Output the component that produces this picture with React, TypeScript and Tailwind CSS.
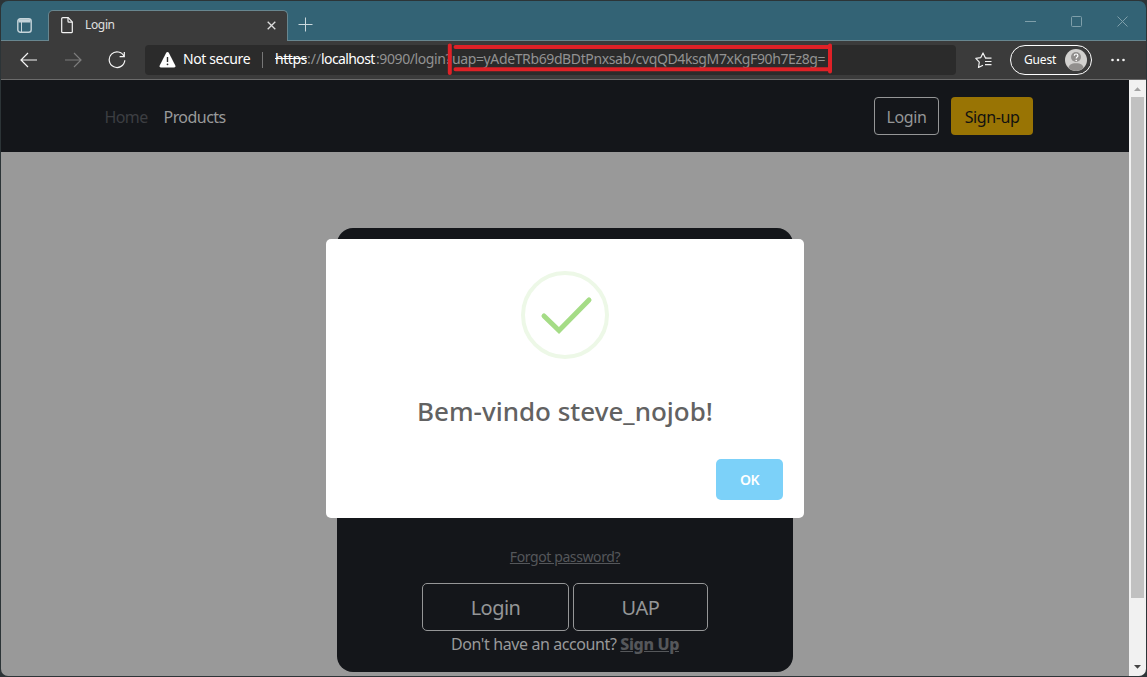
import type { ReactNode } from "react";

function TitleBar() {
  return (
    <div className="flex h-10 shrink-0 items-end bg-[#336375]">
      <div className="flex h-10 w-[47px] items-center justify-center border-b border-[#68868f] pt-[9px]">
        <svg width="15" height="15" viewBox="0 0 15 15" fill="none" stroke="#c5d4da" className="mr-px">
          <rect x=".8" y=".8" width="13.400" height="13.400" rx="2.500" strokeWidth="1.400" />
          <path d="M1.500 2.800h12" strokeWidth="3.200" />
          <path d="M4.500 4v10" strokeWidth="1" />
        </svg>
      </div>
      <div className="-mb-px flex h-8 w-60 items-center rounded-t-[5px] border border-b-0 border-[#68868f] bg-[#3b3b3b] pl-3">
        <svg width="12" height="17" viewBox="0 0 12 17" fill="none" stroke="#f4f4f4" strokeWidth="1.2" className="-mt-[3px]">
          <path d="M1.800.7h5.400l4.100 4.200v9.800c0 .7-.4 1-1 1H1.700c-.7 0-1-.4-1-1V1.800c0-.7.4-1.100 1.100-1.100Z" />
          <path d="M7 .8v3.400c0 .6.3.9.9.9h3.300" />
        </svg>
        <span className="-mt-1 ml-[12px] w-8 text-[12px] tracking-[-0.35px] whitespace-nowrap text-[#e0e0e0]">Login</span>
        <svg width="9" height="9" viewBox="0 0 9 9" stroke="#dedede" strokeWidth="1.300" className="-mt-[2px] mr-[11px] ml-auto">
          <path d="m.7.7 7.600 7.600M8.300.7.7 8.300" />
        </svg>
      </div>
      <div className="flex h-10 flex-1 items-center border-b border-[#68868f] pl-[10px]">
        <svg width="15" height="15" viewBox="0 0 15 15" stroke="#cbd9de" className="mt-[8px]">
          <path d="M.5 7.500h14M7.500.5v14" />
        </svg>
        <div className="mt-[2px] mr-[18px] ml-auto flex items-center gap-[35px]">
          <svg width="11" height="11" viewBox="0 0 11 11" stroke="#7f9faa"><path d="M0 5.500h11" /></svg>
          <svg width="11" height="11" viewBox="0 0 11 11" fill="none" stroke="#7f9faa"><rect x=".5" y=".5" width="10" height="10" rx="1" /></svg>
          <svg width="11" height="11" viewBox="0 0 11 11" stroke="#7f9faa"><path d="m.5.5 10 10M10.500.5l-10 10" /></svg>
        </div>
      </div>
    </div>
  );
}

function Toolbar() {
  return (
    <div className="flex h-[39px] shrink-0 items-center border-b border-[#6b6b6b] bg-[#3b3b3b]">
      <svg width="18" height="16" viewBox="0 0 18 16" fill="none" stroke="#f5f5f5" strokeWidth="1.2" className="ml-[19px]">
        <path d="M8 1 1 8l7 7M1 8h16" />
      </svg>
      <svg width="18" height="16" viewBox="0 0 18 16" fill="none" stroke="#7c7c7c" strokeWidth="1.2" className="ml-[26px]">
        <path d="m10 1 7 7-7 7M17 8H1" />
      </svg>
      <svg width="18" height="18" viewBox="0 0 18 18" fill="none" stroke="#f5f5f5" strokeWidth="1.2" className="ml-[26px]">
        <path d="M16.100 5.400A7.800 7.800 0 1 0 16.800 9.200M16.300 1v4.700h-4.700" />
      </svg>
      <div className="relative ml-[19px] flex h-[30px] w-[811px] items-center rounded-[4px] bg-[#2b2b2b] text-[14px] leading-5 whitespace-nowrap">
        <svg width="17" height="16" viewBox="0 0 17 16" className="ml-[14px]">
          <path d="M8.500 0c.6 0 1 .3 1.300.8l6.500 12.800c.5 1-.1 2-1.200 2H1.900c-1.100 0-1.700-1-1.200-2L7.200.8C7.500.3 7.900 0 8.500 0Z" fill="#fff" />
          <path d="M8.500 5v5" stroke="#2b2b2b" strokeWidth="1.400" />
          <circle cx="8.500" cy="12.300" r=".9" fill="#2b2b2b" />
        </svg>
        <div className="-mt-0.5 flex items-center">
          <span className="ml-[7px] w-[68px] tracking-[-0.4px] text-white">Not secure</span>
          <span className="mt-0.5 ml-[11px] h-4 w-px bg-[#777]" />
          <span className="ml-[12px] w-[32px] tracking-[-0.45px] text-white line-through">https</span>
          <span className="w-[14px] text-[#929292]">://</span>
          <span className="w-[55px] tracking-[-0.6px] text-white">localhost</span>
          <span className="w-[76px] tracking-[-0.4px] text-[#929292]">:9090/login?</span>
          <span className="w-[372px] tracking-[-0.38px] text-[#929292]">uap=yAdeTRb69dBDtPnxsab/cvqQD4ksgM7xKgF90h7Ez8g=</span>
        </div>
        <svg width="388" height="34" viewBox="0 0 388 34" fill="none" stroke="#df2127" strokeWidth="4" strokeLinecap="round" className="absolute -top-[3px] left-[301px]">
          <path d="M3.800 3.500v27.500M9.500 4.900H384M9.500 27.300H384M384 3.500v26" />
        </svg>
      </div>
      <svg width="18" height="17" viewBox="0 0 18 17" fill="none" stroke="#f1f1f1" strokeWidth="1.200" strokeLinejoin="round" className="ml-[19px]">
        <path d="M11.500 6 10.200 5.600 8 1 5.800 5.600.8 6.400l3.500 3.800-.8 5.300L8 13.300M10 6.200h6.500M10 9.500h6.500M10 12.700h6.500" />
      </svg>
      <div className="ml-[17px] flex h-[30px] w-[82px] items-center rounded-full border border-white pl-[13px] text-[12px] text-white">
        <span className="w-[33px] tracking-[-0.15px]">Guest</span>
        <svg width="22" height="22" viewBox="0 0 22 22" className="ml-[8px]">
          <circle cx="11" cy="11" r="11" fill="#d2d1cf" />
          <path d="M3.500 19c.3-3 2.500-4.800 7.500-4.800s7.200 1.800 7.500 4.800A11 11 0 0 1 3.500 19Z" fill="#918f8d" />
          <circle cx="11" cy="8" r="5" fill="#918f8d" />
          <path d="M9.300 6.700c0-2.300 3.600-2.300 3.600 0 0 1.300-1.700 1.300-1.700 2.800" fill="none" stroke="#fff" strokeWidth="1.200" />
          <circle cx="11.200" cy="11.500" r=".8" fill="#fff" />
        </svg>
      </div>
      <svg width="14" height="4" viewBox="0 0 14 4" fill="#f1f1f1" className="ml-[19px]">
        <circle cx="1.500" cy="2" r="1.300" /><circle cx="7" cy="2" r="1.300" /><circle cx="12.500" cy="2" r="1.300" />
      </svg>
    </div>
  );
}

function OutlineButton({ children, className }: { children: ReactNode; className: string }) {
  return (
    <button className={`flex items-center justify-center border border-[#959697] text-[#959697] ${className}`}>{children}</button>
  );
}

function SiteHeader() {
  return (
    <header className="flex h-[72px] shrink-0 items-center bg-[#14161a] pr-24 pl-[103.500px] text-[16px] whitespace-nowrap">
      <a className="mt-px w-[59px] tracking-[-0.6px] text-[#3c3e42]">Home</a>
      <a className="mt-px tracking-[-0.55px] text-[#999a9b]">Products</a>
      <OutlineButton className="ml-auto h-[38px] w-[65px] rounded-[4px] pt-px tracking-[-0.4px]">Login</OutlineButton>
      <button className="ml-3 h-[38px] w-[82px] rounded-[4px] bg-[#997404] pt-px tracking-[-0.4px] text-[#111]">Sign-up</button>
    </header>
  );
}

function LoginCard() {
  return (
    <section className="mx-auto mt-[76px] flex h-[444px] w-[456px] flex-col items-center rounded-2xl bg-[#14161a] whitespace-nowrap">
      <a className="mt-[319px] h-5 text-[14px] leading-5 tracking-[-0.4px] text-[#55575a] underline">Forgot password?</a>
      <div className="mt-4 flex gap-1 text-[20px]">
        <OutlineButton className="h-12 w-[147px] rounded-[5px] pt-0.5 tracking-[-0.55px]">Login</OutlineButton>
        <OutlineButton className="h-12 w-[135px] rounded-[5px] pt-0.5 tracking-[-0.4px]">UAP</OutlineButton>
      </div>
      <p className="text-[16px] leading-[26px] tracking-[-0.4px] text-[#999a9b]">
        Don't have an account? <a className="font-extrabold tracking-[-0.35px] text-[#55575a] underline">Sign Up</a>
      </p>
    </section>
  );
}

function WelcomeDialog() {
  return (
    <div className="absolute top-[159px] left-[325px] flex h-[279px] w-[478px] flex-col items-center rounded-[5px] bg-white">
      <svg width="88" height="88" viewBox="0 0 88 88" fill="none" className="mt-8">
        <circle cx="44" cy="44" r="42" stroke="#edf8e7" strokeWidth="4" />
        <path d="m23 45 15 14.500 30-30.500" stroke="#a5dc86" strokeWidth="5" strokeLinecap="round" />
      </svg>
      <h2 className="mt-8 h-10 text-[26px] leading-10 font-medium whitespace-nowrap text-[#626262]">Bem-vindo steve_nojob!</h2>
      <button className="mt-7 mr-[21px] h-[41px] w-[67px] self-end rounded-[5px] bg-[#7cd1f9] text-[14px] font-semibold tracking-[-0.6px] text-white">OK</button>
    </div>
  );
}

function ScrollBar() {
  return (
    <div className="flex w-[17px] flex-col items-center bg-[#f1f1f1]">
      <svg width="7" height="4" viewBox="0 0 7 4" className="my-[7px]"><path d="M0 4 3.500.2 7 4Z" fill="#a3a3a3" /></svg>
      <div className="-mt-px h-[501px] w-[13px] bg-[#c1c1c1]" />
      <svg width="7" height="4" viewBox="0 0 7 4" className="mt-auto mb-[7px]"><path d="M0 0h7L3.500 3.800Z" fill="#444" /></svg>
    </div>
  );
}

export default function App() {
  return (
    <div className="h-[677px] w-[1147px] overflow-hidden bg-[#2c3437] p-px font-['Noto_Sans',sans-serif]">
      <div className="flex h-full flex-col overflow-hidden rounded-[7px]">
        <TitleBar />
        <Toolbar />
        <div className="flex min-h-0 flex-1">
          <main className="relative flex flex-1 flex-col overflow-hidden bg-[#999]">
            <SiteHeader />
            <LoginCard />
            <WelcomeDialog />
          </main>
          <ScrollBar />
        </div>
      </div>
    </div>
  );
}
